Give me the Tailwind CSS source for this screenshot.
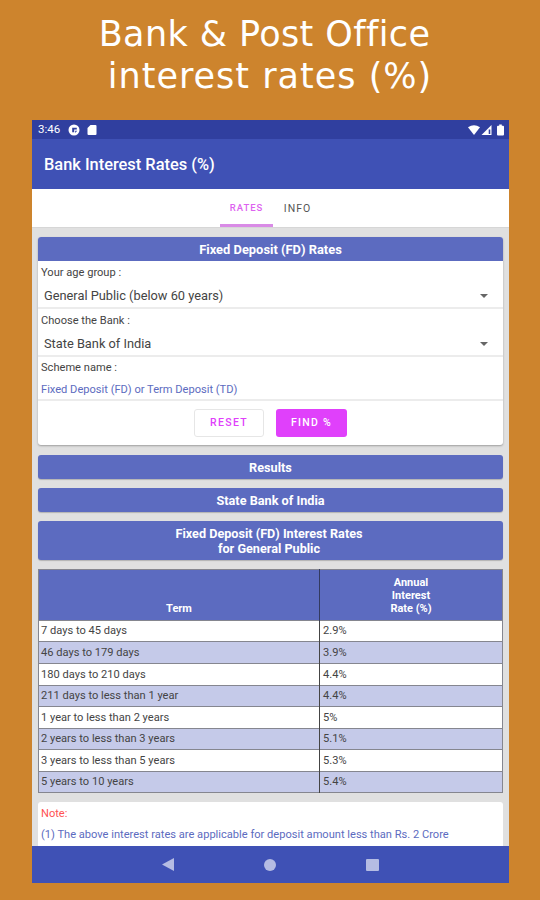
<!DOCTYPE html>
<html lang="en">
<head>
    <meta charset="UTF-8">
    <meta name="viewport" content="width=device-width, initial-scale=1.0">
    <title>Bank Interest Rates (%)</title>
    <script src="https://cdn.jsdelivr.net/npm/@tailwindcss/browser@4"></script>
</head>
<body class="w-[540px] h-[900px] overflow-hidden bg-[#cd842d] font-['Roboto',sans-serif] text-[#444]">
    <h1 class="h-[120px] pt-[13px] text-center font-['DejaVu_Sans',sans-serif] text-[35px] leading-[42px] text-white whitespace-nowrap">
        <span class="block pr-[11px] tracking-[0.4px]">Bank &amp; Post Office</span>
        <span class="block tracking-[1px]">interest rates (%)</span>
    </h1>

    <div class="ml-8 w-[477px] h-[763px] flex flex-col bg-[#e0e0e0]">
        <!-- Status bar -->
        <div class="h-[19px] shrink-0 flex items-center bg-[#303f9f] pl-[6px] pr-[5px] text-white">
            <span class="text-[11.5px] leading-none w-[30px]">3:46</span>
            <svg class="w-3 h-3" viewBox="0 0 12 12">
                <circle cx="6" cy="6" r="5.5" fill="#fff"/>
                <path d="M4.200 3.800h4.600v1.800H6.200v2.600h-2z" fill="#303f9f"/>
                <path d="M7.200 6.800h2l-2 2.200z" fill="#303f9f"/>
            </svg>
            <svg class="ml-[7px] w-[10px] h-3" viewBox="0 0 10 12">
                <path d="M3.500 1H8.500a1 1 0 0 1 1 1v8a1 1 0 0 1-1 1h-7a1 1 0 0 1-1-1V4z" fill="#fff"/>
            </svg>
            <svg class="ml-auto w-3 h-3" viewBox="0 0 12 12">
                <path d="M0 3.300Q6-.9 12 3.300L6 11z" fill="#fff"/>
            </svg>
            <svg class="ml-px w-[11px] h-3" viewBox="0 0 11 12">
                <path d="M10.500 1v10H.5z" fill="#fff"/>
                <path d="M7.700 5.500h1.600v4.500H7.700z" fill="#303f9f"/>
            </svg>
            <svg class="ml-[5px] w-[7px] h-3" viewBox="0 0 7 12">
                <path d="M2.200.5h2.600v1.200H6a1 1 0 0 1 1 1V10.500a1 1 0 0 1-1 1H1a1 1 0 0 1-1-1V2.700a1 1 0 0 1 1-1h1.200z" fill="#fff"/>
            </svg>
        </div>

        <!-- App bar -->
        <div class="h-[50px] shrink-0 flex items-center bg-[#3f51b5] pl-[12px] pt-[3px]">
            <h2 class="text-[16.400px] font-medium text-white whitespace-nowrap">Bank Interest Rates (%)</h2>
        </div>

        <!-- Tabs -->
        <div class="h-[39px] shrink-0 flex justify-center bg-white text-[10px] tracking-[1px] pl-px border-b border-[#d6d6d6]">
            <div class="w-[53px] flex items-center justify-center border-b-[3px] border-[#d98be6] pt-[4px] text-[9.500px] font-medium text-[#dd63f0]">RATES</div>
            <div class="w-[49px] flex items-center justify-center pt-[2px] text-[10.500px] text-[#555]">INFO</div>
        </div>

        <!-- Content -->
        <div class="flex-1 overflow-hidden pl-[6px] pr-[6px] pt-[9px] text-[11.100px]">
            <div class="h-[208px] rounded-[3px] bg-white shadow-[0_1px_2px_rgba(0,0,0,0.3)] overflow-hidden">
                <div class="h-6 flex items-center justify-center bg-[#5c6bc0] pt-[2px] text-[12.900px] font-bold text-white">Fixed Deposit (FD) Rates</div>
                <div class="h-[48px] border-b-2 border-[#ececec] pl-[3px]">
                    <div class="h-[23px] leading-[23px]">Your age group :</div>
                    <div class="flex items-center justify-between pl-[3px] pr-[15px] h-6 text-[12.800px]">
                        <span>General Public (below 60 years)</span>
                        <svg class="w-2 h-1" viewBox="0 0 8 4"><path d="M0 0h8L4 4z" fill="#666"/></svg>
                    </div>
                </div>
                <div class="h-[48px] border-b-2 border-[#ececec] pl-[3px]">
                    <div class="h-[23px] leading-[23px]">Choose the Bank :</div>
                    <div class="flex items-center justify-between pl-[3px] pr-[15px] h-6 text-[12.800px]">
                        <span>State Bank of India</span>
                        <svg class="w-2 h-1" viewBox="0 0 8 4"><path d="M0 0h8L4 4z" fill="#666"/></svg>
                    </div>
                </div>
                <div class="h-[44px] border-b-2 border-[#ececec] pl-[3px]">
                    <div class="h-[22px] leading-[22px]">Scheme name :</div>
                    <div class="h-[21px] leading-[21px] text-[#5c6bc0]">Fixed Deposit (FD) or Term Deposit (TD)</div>
                </div>
                <div class="h-[43px] flex items-center justify-center gap-3 text-[10.500px] font-medium tracking-[1.3px]">
                    <button class="w-[70px] h-7 rounded-[3px] border border-[#e6e6e6] pt-px text-[#e040fb]">RESET</button>
                    <button class="w-[71px] h-7 rounded-[3px] bg-[#e040fb] pt-px text-white">FIND %</button>
                </div>
            </div>

            <div class="mt-[10px] h-6 flex items-center justify-center rounded-[3px] bg-[#5c6bc0] pt-px text-[12.700px] font-bold text-white shadow-[0_1px_1px_rgba(0,0,0,0.2)]">Results</div>
            <div class="mt-[9px] h-6 flex items-center justify-center rounded-[3px] bg-[#5c6bc0] pt-px text-[12.700px] font-bold text-white shadow-[0_1px_1px_rgba(0,0,0,0.2)]">State Bank of India</div>
            <div class="mt-[9px] h-[39px] flex items-center justify-center rounded-[3px] bg-[#5c6bc0] pr-[3px] text-center text-[12.650px] leading-[15px] font-bold text-white shadow-[0_1px_1px_rgba(0,0,0,0.2)]">Fixed Deposit (FD) Interest Rates<br>for General Public</div>

            <table class="mt-[9px] w-full table-fixed border-collapse border border-[#85868f] leading-none">
                <thead>
                    <tr class="h-[51px] bg-[#5c6bc0] align-bottom text-[11px] leading-[13px] text-white">
                        <th class="w-[281px] pb-[5px] border-r border-[#333a60]">Term</th>
                        <th class="pb-[5px]">Annual<br>Interest<br>Rate (%)</th>
                    </tr>
                </thead>
                <tbody>
                    <tr class="h-[21px] border-t border-[#85868f] bg-white"><td class="pl-[2px] border-r border-[#444]">7 days to 45 days</td><td class="pl-[3px]">2.9%</td></tr>
                    <tr class="h-[22px] border-t border-[#85868f] bg-[#c5cae9]"><td class="pl-[2px] border-r border-[#444]">46 days to 179 days</td><td class="pl-[3px]">3.9%</td></tr>
                    <tr class="h-[22px] border-t border-[#85868f] bg-white"><td class="pl-[2px] border-r border-[#444]">180 days to 210 days</td><td class="pl-[3px]">4.4%</td></tr>
                    <tr class="h-[21px] border-t border-[#85868f] bg-[#c5cae9]"><td class="pl-[2px] border-r border-[#444]">211 days to less than 1 year</td><td class="pl-[3px]">4.4%</td></tr>
                    <tr class="h-[22px] border-t border-[#85868f] bg-white"><td class="pl-[2px] border-r border-[#444]">1 year to less than 2 years</td><td class="pl-[3px]">5%</td></tr>
                    <tr class="h-[21px] border-t border-[#85868f] bg-[#c5cae9]"><td class="pl-[2px] border-r border-[#444]">2 years to less than 3 years</td><td class="pl-[3px]">5.1%</td></tr>
                    <tr class="h-[22px] border-t border-[#85868f] bg-white"><td class="pl-[2px] border-r border-[#444]">3 years to less than 5 years</td><td class="pl-[3px]">5.3%</td></tr>
                    <tr class="h-[21px] border-t border-[#85868f] bg-[#c5cae9]"><td class="pl-[2px] border-r border-[#444]">5 years to 10 years</td><td class="pl-[3px]">5.4%</td></tr>
                </tbody>
            </table>

            <div class="mt-[9px] h-[60px] rounded-[3px] bg-white pl-[3px]">
                <p class="h-[22px] leading-[23px] text-[#ff5252]">Note:</p>
                <p class="h-[21px] leading-[21px] text-[#5c6bc0]">(1) The above interest rates are applicable for deposit amount less than Rs. 2 Crore</p>
            </div>
        </div>

        <!-- System navigation -->
        <div class="h-[37px] shrink-0 flex items-center bg-[#3f51b5] text-[#b5bce3]">
            <svg class="ml-[130px] w-3 h-[13px]" viewBox="0 0 12 13"><path d="M12 0v13L0 6.500z" fill="currentColor"/></svg>
            <svg class="ml-[90px] w-3 h-3" viewBox="0 0 12 12"><circle cx="6" cy="6" r="6" fill="currentColor"/></svg>
            <svg class="ml-[90px] w-[13px] h-3" viewBox="0 0 13 12"><rect width="13" height="12" rx="1" fill="currentColor"/></svg>
        </div>
    </div>
</body>
</html>
